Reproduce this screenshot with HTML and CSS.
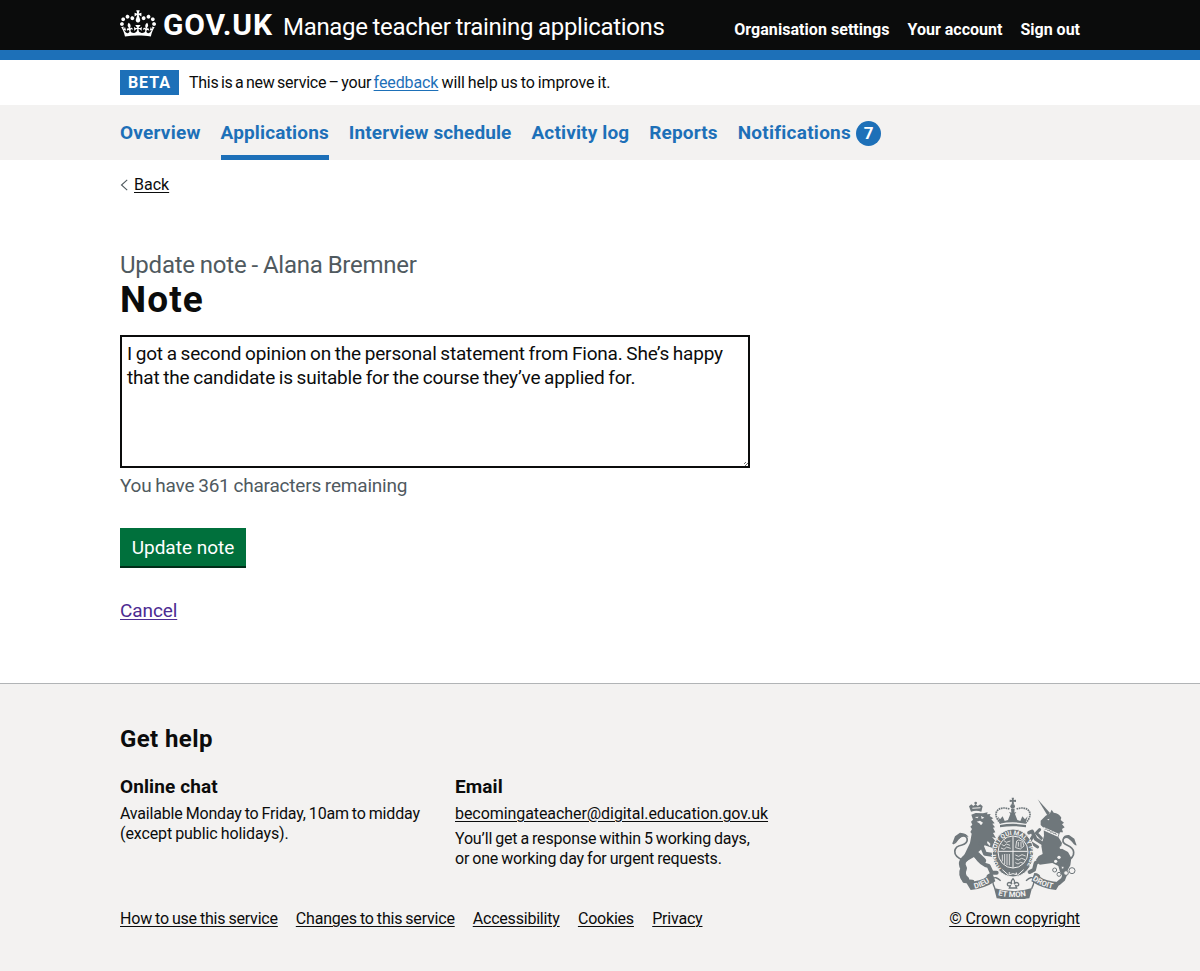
FILE: index.html
```html
<!DOCTYPE html>
<html lang="en">
<head>
<meta charset="utf-8">
<title>Update note - Manage teacher training applications</title>
<link rel="stylesheet" href="styles.css">
</head>
<body>
<header class="header">
  <div class="container header-row">
    <a class="logo" href="#">
      <svg class="crown" viewBox="0 0 132 97" width="36" height="27" aria-hidden="true"><path fill="currentColor" fill-rule="evenodd" d="M25 30.2c3.5 1.5 7.7-.2 9.1-3.7 1.5-3.6-.2-7.8-3.9-9.2-3.6-1.4-7.6.3-9.1 3.9-1.4 3.5.3 7.5 3.9 9zM9 39.5c3.6 1.5 7.8-.2 9.2-3.7 1.5-3.6-.2-7.8-3.9-9.1-3.6-1.5-7.6.2-9.1 3.8-1.4 3.5.3 7.5 3.8 9zM4.4 57.2c3.5 1.5 7.7-.2 9.1-3.8 1.5-3.6-.2-7.7-3.9-9.1-3.5-1.5-7.6.3-9.1 3.8-1.4 3.5.3 7.6 3.9 9.1zm38.3-21.4c3.5 1.5 7.7-.2 9.1-3.8 1.5-3.6-.2-7.7-3.9-9.1-3.6-1.5-7.6.3-9.1 3.8-1.3 3.6.4 7.7 3.9 9.1zm64.4-5.6c-3.6 1.5-7.8-.2-9.1-3.7-1.5-3.6.2-7.8 3.8-9.2 3.6-1.4 7.7.3 9.2 3.9 1.3 3.5-.4 7.5-3.9 9zm15.9 9.3c-3.6 1.5-7.7-.2-9.1-3.7-1.5-3.6.2-7.8 3.7-9.1 3.6-1.5 7.7.2 9.2 3.8 1.5 3.5-.3 7.5-3.8 9zm4.7 17.7c-3.6 1.5-7.8-.2-9.2-3.8-1.5-3.6.2-7.7 3.9-9.1 3.6-1.5 7.7.3 9.2 3.8 1.3 3.5-.4 7.6-3.9 9.1zM89.3 35.8c-3.6 1.5-7.8-.2-9.2-3.8-1.4-3.6.2-7.7 3.9-9.1 3.6-1.5 7.7.3 9.2 3.8 1.4 3.6-.3 7.7-3.9 9.1zM69.7 17.7l8.9 4.7V9.3l-8.9 2.8c-.2-.3-.5-.6-.9-.9L72.4 0H59.6l3.5 11.2c-.3.3-.6.5-.9.9l-8.8-2.8v13.1l8.8-4.7c.3.3.6.7.9.9l-5 15.4v.1c-.2.8-.4 1.6-.4 2.4 0 4.1 3.1 7.5 7 8.1h.2c.3 0 .7.1 1 .1.4 0 .7 0 1-.1h.2c4-.6 7.1-4.1 7.1-8.1 0-.8-.1-1.7-.4-2.4V34l-5.1-15.4c.4-.2.7-.6 1-.9zM66 92.8c16.9 0 32.8 1.1 47.1 3.2 4-16.9 8.9-26.7 14-33.5l-9.6-3.4c1 4.9 1.1 7.2 0 10.2-1.5-1.4-3-4.3-4.2-8.7L108.6 76c2.8-2 5-3.2 7.5-3.3-4.4 9.4-10 11.9-13.6 11.2-4.3-.8-6.3-4.6-5.6-7.9 1-4.7 5.7-5.9 8-.5 4.3-8.7-3-11.4-7.6-8.8 7.1-7.2 7.9-13.5 2.1-21.1-8 6.1-8.1 12.3-4.5 20.8-4.7-5.4-12.1-2.5-9.5 6.2 3.4-5.2 7.9-2 7.2 3.1-.6 4.3-6.4 7.8-13.5 7.2-10.3-.9-10.9-8-11.2-13.8 2.5-.5 7.1 1.8 11 7.3L80.2 60c-4.1 4.4-8 5.3-12.3 5.4 1.4-4.4 8-11.6 8-11.6H55.5s6.4 7.2 7.9 11.6c-4.2-.1-8-1-12.3-5.4l1.4 16.4c3.9-5.5 8.5-7.7 10.9-7.3-.3 5.8-.9 12.8-11.1 13.8-7.2.6-12.9-2.9-13.5-7.2-.7-5 3.8-8.3 7.1-3.1 2.7-8.7-4.6-11.6-9.4-6.2 3.7-8.5 3.6-14.7-4.6-20.8-5.8 7.6-5 13.9 2.2 21.1-4.7-2.6-11.9.1-7.7 8.8 2.3-5.5 7.1-4.2 8.1.5.7 3.3-1.3 7.1-5.7 7.9-3.5.7-9-1.8-13.5-11.2 2.5.1 4.7 1.3 7.5 3.3l-4.7-15.4c-1.2 4.4-2.7 7.2-4.3 8.7-1.1-3-.9-5.3 0-10.2l-9.5 3.4c5 6.9 9.9 16.7 14 33.5 14.8-2.1 30.8-3.2 47.7-3.2z"/></svg>
      <span class="logotype">GOV.UK</span>
    </a>
    <a class="product" href="#">Manage teacher training applications</a>
    <nav class="account-nav">
      <a class="org" href="#">Organisation settings</a>
      <a class="acct" href="#">Your account</a>
      <a class="out" href="#">Sign out</a>
    </nav>
  </div>
</header>
<div class="container phase">
  <strong class="tag">BETA</strong>
  <span class="phase-text">This is a new service – your <a href="#">feedback</a><span class="phase-end"> will help us to improve it.</span></span>
</div>
<nav class="primary">
  <ul class="container primary-list">
    <li class="n1"><a href="#">Overview</a></li>
    <li class="n2 current"><a href="#">Applications</a></li>
    <li class="n3"><a href="#">Interview schedule</a></li>
    <li class="n4"><a href="#">Activity log</a></li>
    <li class="n5"><a href="#">Reports</a></li>
    <li class="n6"><a href="#">Notifications</a><span class="count">7</span></li>
  </ul>
</nav>
<main class="container main">
  <div class="back"><svg width="8" height="12" viewBox="0 0 8 12" aria-hidden="true"><path d="M7.2.9 1.5 6l5.7 5.1" fill="none" stroke="#505a5f" stroke-width="1.1"/></svg><a href="#">Back</a></div>
  <h1 class="heading"><span class="caption">Update note - Alana Bremner</span><span class="title">Note</span></h1>
  <textarea class="note" rows="5" spellcheck="false" aria-label="Note">I got a second opinion on the personal statement from Fiona. She’s happy that the candidate is suitable for the course they’ve applied for.</textarea>
  <p class="hint">You have 361 characters remaining</p>
  <button class="button">Update note</button>
  <p class="cancel"><a href="#">Cancel</a></p>
</main>
<footer class="footer">
  <div class="container">
    <h2 class="help">Get help</h2>
    <div class="columns">
      <section class="chat">
        <h3>Online chat</h3>
        <p>Available Monday to Friday, 10am to midday<br><span class="chat2">(except public holidays).</span></p>
      </section>
      <section class="email">
        <h3>Email</h3>
        <p class="address"><a href="#">becomingateacher@digital.education.gov.uk</a></p>
        <p>You’ll get a response within 5 working days,<br><span class="email2">or one working day for urgent requests.</span></p>
      </section>
      <svg class="crest" viewBox="9 11 378 306" width="126" height="102" aria-hidden="true">
        <defs>
          <path id="ring" d="M160 225A51 58 0 1 1 232 223"/>
          <path id="dieu" d="M80 286Q108 280 134 261"/>
          <path id="mon" d="M150 306Q195 317 242 306"/>
          <path id="droit" d="M253 259Q282 281 318 287"/>
        </defs>
        <g class="lion" fill="#6f777b">
          <path d="M69 55l-6-16 7-6 6 5 7-6 6 6 8-5 7 6-4 16q-15-5-31 0z"/>
          <circle cx="83" cy="29" r="4"/>
          <path d="M70 64l13-5 22 1 14-3-2 6 11-1-3 6 11 7-6 3 10 12-7 1 8 11-6 1 7 14-7 2 9 16-12-4 22 25-9 24-10-3-3-14-22-7-8 10-12 11-12 14-36 20 5-22 19-40 5-28-4-5 5-9-5-7 6-6-4-9 6-6z"/>
        </g>
        <g fill="none" stroke="#6f777b" stroke-linecap="round" stroke-linejoin="round">
          <path d="M70 180C46 198 36 207 47 225Q38 245 53 258" stroke-width="20"/>
          <path d="M43 251L49 263L73 265" stroke-width="12"/>
          <path d="M98 150L111 181L132 184" stroke-width="12"/>
          <path d="M84 188Q99 213 122 218L131 238L146 238" stroke-width="12"/>
          <path d="M86 185L104 202" stroke-width="20"/>
        </g>
        <g fill="#6f777b">
          <path d="M287 104l-9-9 0-13 15-15 13-7 5-11 6 9q16 2 23 15l-2 7 10 8-6 5 8 9-8 5 3 10-9 0-5 14 11 18-4 15 22 12 10 18-3 22-11 20-12 15-8-16-5-17-18-9-38 5-11-15 8-11 12-6-4-24 8-31z"/>
          <path d="M269 18l37 41-8 7z"/>
        </g>
        <g fill="none" stroke="#6f777b" stroke-linecap="round" stroke-linejoin="round">
          <path d="M283 150L263 137L252 114L243 118" stroke-width="11"/>
          <path d="M280 135L265 119L275 109" stroke-width="9"/>
          <path d="M255 128L245 145L269 161" stroke-width="9"/>
          <path d="M290 188L276 202L263 209L258 229L245 236" stroke-width="12"/>
          <path d="M345 211L353 238L345 258L332 269" stroke-width="13"/>
        </g>
        <g fill="#6f777b">
          <path d="M54 267l14 23q42-4 74-26l-9-25q-17 1-18 12-12 12-61 16zM338 267l-14 23q-42-4-74-26l9-25q17 1 18 12 12 12 61 16z"/>
          <path d="M138 284q57 18 114 0l-8 31q-49 8-98 0z"/>
        </g>
        <g fill="none" stroke="#6f777b" stroke-width="5">
          <path d="M46 201C7 185 18 159 42 155S61 119 37 130C23 138 29 148 15 151"/>
          <path d="M354 205C390 187 378 164 358 156S342 127 363 132C375 137 373 150 384 154"/>
        </g>
        <path d="M12 153l9-24 15-11q20 1 26 14-18-9-26 3zM386 157l-7-21-16-11q-15-1-19 10 14-5 22 5z" fill="#6f777b"/>
        <g fill="none" stroke="#6f777b" stroke-width="4">
          <path d="M158 262c-23-21-30-2-17 24M234 262c23-21 30-2 17 24"/>
        </g>
        <ellipse cx="195" cy="179" rx="62" ry="72" fill="#6f777b" stroke="#f3f2f1" stroke-width="3"/>
        <ellipse cx="195" cy="176" rx="45" ry="48" fill="#6f777b" stroke="#f3f2f1" stroke-width="3"/>
        <g stroke="#f3f2f1" stroke-width="3" fill="none">
          <path d="M195 129v94M151 174h88"/>
          <path d="M161 153l7 5 7-6 11 4M159 164l9 4 8-7 12 4M168 142l7 5 12-4M163 184v20M170 182v30M177 182v34M184 182v34M202 185l10 4 10-5 11 4M202 196l9 4 10-5 10 4M202 208l8 4 8-5 8 3M206 143l-3 20 14 4 11-9-4-14-12-4zM211 146v14M219 146v16" stroke-width="2.5"/>
          <path d="M163 229l18 16 14-4 14 4 18-16"/>
        </g>
        <g fill="#6f777b">
          <path d="M191 13h7l-1 7 7-1v7l-7-1 1 8h-7l1-8-7 1v-7l7 1zM156 91l-7-22 7 9 8-9 6 14 10-3 7-18-4-6 11 3 11-3-4 6 7 18 9 3 6-14 8 9 8-9-7 22q-38-8-77 0zM156 95q39-7 78 0v7q-39-7-78 0z"/>
          <circle cx="194" cy="39" r="7"/>
          <path d="M189 46h11l-2 22h-7z"/>
        </g>
        <g fill="none" stroke="#6f777b" stroke-width="5" stroke-dasharray="5 2">
          <path d="M158 90C126 58 154 34 186 48M232 90C264 58 236 34 204 48"/>
        </g>
        <g fill="#f3f2f1">
          <path d="M80 71l12-1-4 5zM99 68l10 5-8 4zM86 85l10-3 9 6-6 8-5-6zM297 79l7-3-1 5zM287 101l45 20-3 9-45-20z"/>
          <circle cx="339" cy="163" r="4"/><circle cx="333" cy="192" r="5"/><circle cx="323" cy="204" r="5"/>
          <circle cx="184" cy="239" r="2.5"/><circle cx="205" cy="240" r="2.5"/>
          <path d="M73 43l25-1-1 3-24 1zM119 143l8 8-1 8-9-10z"/>
        </g>
        <path d="M290 109l5-3 4 6 5-2 4 7 5-2 4 6 5-2 3 6" fill="none" stroke="#6f777b" stroke-width="2.5"/>
        <g fill="#f3f2f1" stroke="#6f777b" stroke-width="3">
          <circle cx="320" cy="230" r="6"/><circle cx="333" cy="243" r="6"/><circle cx="354" cy="239" r="7"/><circle cx="372" cy="232" r="9"/><circle cx="344" cy="223" r="4"/>
        </g>
        <path d="M195 256q-9 9-3 16-11-9-14 0 0 8 9 5l-3 7h22l-3-7q10 3 9-5-4-9-14 0 5-7-3-16z" fill="none" stroke="#6f777b" stroke-width="4"/>
        <g class="motto">
          <text class="ring-text"><textPath href="#ring">HONI SOIT QUI MAL Y PENSE</textPath></text>
          <text><textPath href="#dieu">DIEU</textPath></text>
          <text><textPath href="#mon">ET MON</textPath></text>
          <text><textPath href="#droit">DROIT</textPath></text>
        </g>
      </svg>
    </div>
    <div class="meta">
      <a class="m1" href="#">How to use this service</a>
      <a class="m2" href="#">Changes to this service</a>
      <a class="m3" href="#">Accessibility</a>
      <a class="m4" href="#">Cookies</a>
      <a class="m5" href="#">Privacy</a>
      <a class="copyright" href="#">© Crown copyright</a>
    </div>
  </div>
</footer>
</body>
</html>
```

FILE: styles.css
```css
* { box-sizing: border-box; }
body { margin: 0; background: #fff; color: #0b0c0c; font: 16px/20px Roboto, "Liberation Sans", sans-serif; }
h1, h2, h3, p, ul { margin: 0; padding: 0; }
a { color: inherit; text-decoration-thickness: 1px; text-underline-offset: 2px; }
.container { width: 960px; margin-left: auto; margin-right: auto; }
.header { height: 60px; background: #0b0c0c; border-bottom: 10px solid #1d70b8; color: #fff; }
.header a { text-decoration: none; white-space: nowrap; }
.header-row { display: flex; align-items: flex-start; }
.logo { display: flex; width: 163px; padding-top: 10px; }
.crown { flex: none; margin-right: 7px; }
.logotype { font-size: 30px; font-weight: 700; line-height: 30px; letter-spacing: .85px; }
.product { font-size: 24px; line-height: 30px; padding-top: 12px; letter-spacing: -.31px; word-spacing: -.8px; }
.account-nav { display: flex; gap: 18px; margin-left: auto; padding-top: 20px; font-weight: 700; }
.org { letter-spacing: .05px; }
.phase { display: flex; height: 45px; padding-top: 10px; }
.tag { width: 59px; height: 25px; background: #1d70b8; color: #fff; line-height: 25px; text-align: center; letter-spacing: 1px; margin-right: 10px; }
.phase-text { line-height: 26px; white-space: nowrap; letter-spacing: -.25px; word-spacing: -1.25px; }
.phase-text a { color: #1d70b8; letter-spacing: -.1px; }
.phase-end { letter-spacing: -.12px; word-spacing: -.7px; }
.primary { background: #f3f2f1; height: 55px; }
.primary-list { display: flex; gap: 20px; list-style: none; height: 55px; font-size: 19px; font-weight: 700; line-height: 25px; color: #1d70b8; letter-spacing: .14px; }
.primary-list li { display: flex; padding-top: 15px; white-space: nowrap; }
.primary-list a { text-decoration: none; }
.primary-list .n1 { letter-spacing: .22px; }
.primary-list .n3 { letter-spacing: .1px; }
.primary-list .n6 { letter-spacing: .25px; }
.current { border-bottom: 5px solid #1d70b8; }
.count { width: 25px; height: 25px; border-radius: 50%; margin-top: 1px; margin-left: 5px; background: #1d70b8; color: #fff; font-size: 17px; text-align: center; letter-spacing: 0; }
.main { height: 523px; padding-top: 15px; }
.back { display: flex; align-items: center; gap: 6px; height: 20px; }
.heading { margin-top: 55px; }
.caption, .title { display: block; }
.caption { color: #505a5f; font-size: 24px; font-weight: 400; line-height: 30px; letter-spacing: -.23px; word-spacing: -.7px; }
.title { font-size: 37px; line-height: 40px; letter-spacing: 1.1px; }
.note { display: block; width: 630px; height: 133px; margin-top: 15px; padding: 5px; border: 2px solid #0b0c0c; border-radius: 0; color: #0b0c0c; font: 19px/23.75px Roboto, sans-serif; letter-spacing: -.18px; word-spacing: -.8px; outline: 0; }
.note::-webkit-resizer { background: repeating-linear-gradient(135deg, #fff 0 1px, #6b6b6b 1px 2px) 100% 100% / 4px 4px no-repeat; }
.hint { margin-top: 5px; font-size: 19px; line-height: 25px; color: #505a5f; letter-spacing: -.2px; word-spacing: -.7px; }
.button { display: block; width: 126px; height: 38px; margin-top: 30px; padding: 1px 0 0; border: 0; background: #00703c; box-shadow: 0 2px 0 #002d18; color: #fff; font: 19px/37px Roboto, sans-serif; }
.cancel { margin-top: 32px; font-size: 19px; line-height: 25px; color: #4c2c92; letter-spacing: -.1px; }
.footer { height: 288px; background: #f3f2f1; border-top: 1px solid #b1b4b6; padding-top: 40px; }
.help { font-size: 24px; line-height: 30px; letter-spacing: .4px; }
.columns { display: flex; height: 145px; padding-top: 20px; letter-spacing: -.18px; word-spacing: -.75px; }
.columns h3 { font-size: 19px; line-height: 25px; margin-bottom: 5px; letter-spacing: .1px; word-spacing: 0; }
.chat { width: 335px; }
.chat2 { letter-spacing: -.1px; }
.email { width: 400px; }
.address { margin-bottom: 5px; letter-spacing: -.07px; }
.crest { margin-left: auto; margin-right: 3px; margin-top: 23px; }
.motto { fill: #f3f2f1; font: 700 23px Roboto, sans-serif; letter-spacing: 0; word-spacing: 0; }
.ring-text { font-size: 19px; }
.meta { display: flex; gap: 18px; padding-top: 10px; white-space: nowrap; letter-spacing: -.2px; word-spacing: -.7px; }
.m3, .m4 { margin-right: .25px; }
.copyright { margin-left: auto; letter-spacing: -.1px; word-spacing: 0; }
```
